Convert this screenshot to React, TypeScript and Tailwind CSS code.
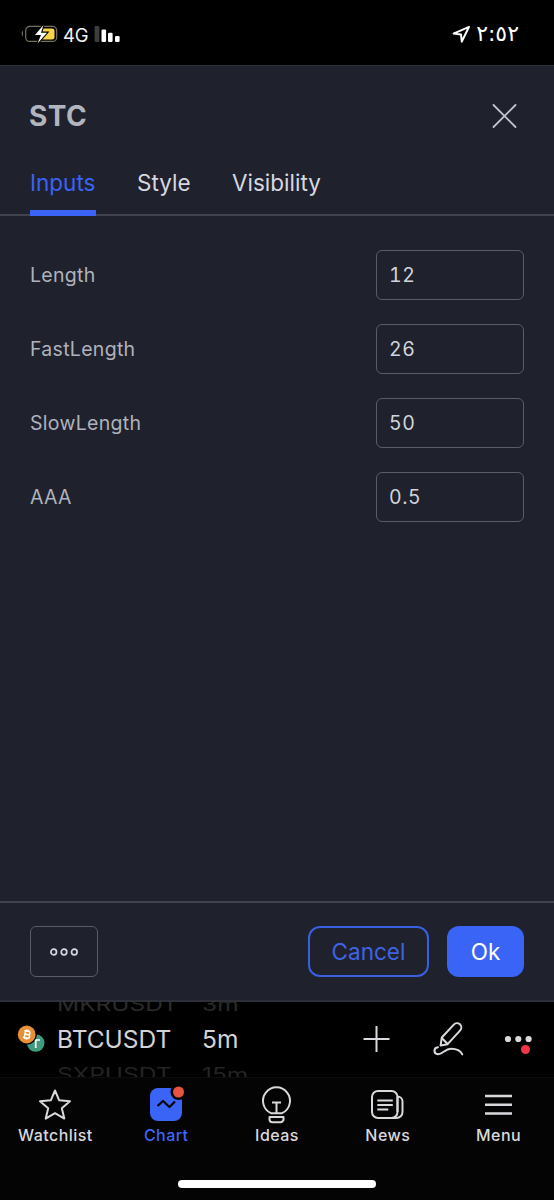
import React from 'react';

interface InputField {
  label: string;
  value: string;
}

const fields: InputField[] = [
  { label: 'Length', value: '12' },
  { label: 'FastLength', value: '26' },
  { label: 'SlowLength', value: '50' },
  { label: 'AAA', value: '0.5' },
];

const StatusBar: React.FC = () => (
  <div className="h-[65px] shrink-0 flex items-start justify-between pl-[21px] pr-[35px] pt-[24px]">
    <div className="flex items-start">
      <svg width="38" height="20" viewBox="0 0 38 20" fill="none">
        <path d="M2 6.5a4 4 0 0 0 0 6z" fill="#66645c" />
        <rect x="4.7" y="2.4" width="31" height="15" rx="4" stroke="#77735f" strokeWidth="1.2" />
        <path d="M20 4.4h11a2.5 2.5 0 0 1 2.5 2.5v6a2.5 2.5 0 0 1-2.5 2.5H20z" fill="#f9d448" />
        <path d="M22.5 1L14 11h6l-3.5 8.5L26 8.7h-6z" fill="#fff" stroke="#000" strokeWidth="2.2" paintOrder="stroke" />
      </svg>
      <span className="ml-[4px] w-[25px] text-[18.5px] leading-[22px] tracking-[-0.3px] text-[#f2f2f2]">4G</span>
      <svg className="ml-[6px]" width="28" height="20" viewBox="0 0 28 20" fill="#fff">
        <rect x="0.6" y="2" width="4.8" height="16" rx="1.2" fill="#3d3d3d" />
        <rect x="7.5" y="5.6" width="4.6" height="12.4" rx="1.2" />
        <rect x="14" y="8.7" width="4.6" height="9.3" rx="1.2" />
        <rect x="21" y="12" width="4.6" height="6" rx="1.2" />
      </svg>
    </div>
    <div className="flex items-start">
      <svg width="20" height="20" viewBox="0 0 20 20" fill="none" stroke="#fff" strokeWidth="2" strokeLinejoin="round">
        <path d="M18 2.8L2.6 9.6l7.4.8.8 7.2z" />
      </svg>
      <span className="ml-[5px] font-['DejaVu_Sans',sans-serif] text-[22px] leading-[20px] text-white">٢:٥٢</span>
    </div>
  </div>
);

const DialogHeader: React.FC = () => (
  <div className="h-[150px] shrink-0 border-b-2 border-[#41434e]">
    <div className="h-[100px] flex items-center justify-between pl-[29px] pr-[37px]">
      <h1 className="text-[28px] font-bold tracking-[0.4px] text-[#b2b5be]">STC</h1>
      <svg width="26" height="26" viewBox="0 0 26 26" stroke="#c1c4cd" strokeWidth="1.8" strokeLinecap="round">
        <path d="M2.5 2l22 22M24.5 2l-22 22" />
      </svg>
    </div>
    <div className="h-[50px] flex pl-[30px] text-[22.5px] leading-[34px] text-[#d6d8e0]">
      <div className="w-[66px] border-b-[6px] border-[#3a64f6] text-[#3a64f6] whitespace-nowrap">Inputs</div>
      <div className="ml-[41px] w-[54px] whitespace-nowrap">Style</div>
      <div className="ml-[41px] whitespace-nowrap">Visibility</div>
    </div>
  </div>
);

const DialogFooter: React.FC = () => (
  <div className="h-[101px] shrink-0 flex items-center justify-between border-y-2 border-t-[#41434e] border-b-[#2c2e38] pl-[30px] pr-[30px]">
    <button className="w-[68px] h-[51px] flex items-center justify-center rounded-[6px] border-[1.5px] border-[#5a5d67]">
      <svg width="30" height="10" viewBox="0 0 30 10" fill="none" stroke="#d6d8e0" strokeWidth="1.7">
        <circle cx="4.7" cy="5" r="2.8" />
        <circle cx="15" cy="5" r="2.8" />
        <circle cx="25.3" cy="5" r="2.8" />
      </svg>
    </button>
    <div className="flex gap-[18px] text-[22.5px]">
      <button className="w-[121px] h-[51px] rounded-[12px] border-2 border-[#3a5fe0] text-[#3f63e4]">Cancel</button>
      <button className="w-[77px] h-[51px] rounded-[12px] bg-[#3a64f6] text-white">Ok</button>
    </div>
  </div>
);

interface WheelProps {
  prev: string;
  current: string;
  next: string;
}

// Picker column, the neighbours are flattened and cut off by the bar edges
const Wheel: React.FC<WheelProps> = ({ prev, current, next }) => (
  <div className="h-[75px] overflow-hidden flex flex-col text-[24.5px] leading-[28px] whitespace-nowrap">
    <div className="-mt-[12px] h-[28px] shrink-0 scale-y-75 text-[#2a2a2a]">{prev}</div>
    <div className="mt-[7px] h-[28px] shrink-0 text-[#d3d3d6]">{current}</div>
    <div className="mt-[7px] h-[28px] shrink-0 scale-y-75 text-[#232323]">{next}</div>
  </div>
);

const SymbolBar: React.FC = () => (
  <div className="h-[75px] shrink-0 flex items-start">
    <svg className="mt-[22px] ml-[17px] mr-[12px]" width="28" height="30" viewBox="0 0 28 30">
      <circle cx="18.7" cy="19" r="8.8" fill="#409b7c" />
      <path d="M14.5 16h8.5M18.7 16v8" stroke="#fff" strokeWidth="1.7" />
      <circle cx="9.7" cy="10.5" r="10.2" fill="#000" />
      <circle cx="9.7" cy="10.5" r="8.9" fill="#e98f35" />
      <g transform="rotate(12 9.7 10.5)" fill="none" stroke="#fff" strokeWidth="1.5">
        <path d="M6.5 7h4.3a1.7 1.7 0 0 1 0 3.5H7.8h3.4a1.7 1.7 0 0 1 0 3.5H6.5M7.9 7v7M8.7 5.5V7M10.7 5.5V7M8.7 14v1.5M10.7 14v1.5" />
      </g>
    </svg>
    <div className="w-[145px]">
      <Wheel prev="MKRUSDT" current="BTCUSDT" next="SXPUSDT" />
    </div>
    <div className="w-[160px]">
      <Wheel prev="3m" current="5m" next="15m" />
    </div>
    <div className="h-[73px] flex items-center">
      <svg width="30" height="30" viewBox="0 0 30 30" stroke="#dadade" strokeWidth="2">
        <path d="M1.5 15h26M14.5 2v26" />
      </svg>
      <svg className="ml-[40px]" width="34" height="38" viewBox="0 0 34 38" fill="none" stroke="#dadade" strokeWidth="2" strokeLinecap="round" strokeLinejoin="round">
        <path d="M9.8 17.5L21.8 4.6a4.2 4.2 0 0 1 6.4 5.8L15.6 24.2l-7 1.4z" />
        <path d="M10 18.2l5.4 5.6" />
        <path d="M6 27.2c-4.7.4-4.7 7 0 7 4.8 0 7-5.4 13-5.4 5 0 9.3 1.4 11.3 5.6" />
      </svg>
      <div className="relative ml-[38px] w-[30px] h-[8px]">
        <svg className="block" width="30" height="8" viewBox="0 0 30 8" fill="#dadade">
          <circle cx="4" cy="4" r="3.1" />
          <circle cx="14.3" cy="4" r="3.1" />
          <circle cx="24.6" cy="4" r="3.1" />
        </svg>
        <span className="absolute left-[17px] top-[10px] w-[9px] h-[9px] rounded-full bg-[#f23645]" />
      </div>
    </div>
  </div>
);

interface NavItemProps {
  label: string;
  active?: boolean;
  children: React.ReactNode;
}

const NavItem: React.FC<NavItemProps> = ({ label, active, children }) => (
  <div className={active ? 'flex flex-col items-center text-[#3f66f5]' : 'flex flex-col items-center text-[#d9d9dd]'}>
    <svg width="40" height="40" viewBox="0 0 40 40" fill="none" stroke="currentColor" strokeWidth="2" strokeLinejoin="round">
      {children}
    </svg>
    <span className="mt-[1px] text-[16px] leading-[20px] font-medium tracking-[0.45px]">{label}</span>
  </div>
);

const BottomNav: React.FC = () => (
  <div className="h-[123px] shrink-0 flex flex-col items-center justify-between border-t border-[#0c0c0c] bg-[#040404] pb-[12px]">
    <div className="w-full grid grid-cols-5 pt-[6px]">
      <NavItem label="Watchlist">
        <path d="M20 6.5l4.2 9.8 10.8.9-8.2 7 2.5 10.4L20 29.2l-9.3 5.4 2.5-10.4-8.2-7 10.8-.9z" />
      </NavItem>
      <NavItem label="Chart" active>
        <rect x="4" y="4" width="32" height="33" rx="8" fill="#3a64f6" stroke="none" />
        <path d="M11.5 22l5.5-5 6.5 6 5.5-5.5" stroke="#040404" strokeWidth="2.2" />
        <circle cx="32.5" cy="8" r="8" fill="#040404" stroke="none" />
        <circle cx="32.5" cy="8" r="5.5" fill="#e65440" stroke="none" />
      </NavItem>
      <NavItem label="Ideas">
        <path d="M14 29.2a13.5 13.5 0 1 1 11 0z" />
        <path d="M15 18.5h9M19.5 18.5V29M12.500 33h14v2.2a3 3 0 0 1-3 3h-8a3 3 0 0 1-3-3z" />
      </NavItem>
      <NavItem label="News">
        <rect x="4" y="7" width="25.5" height="27" rx="6" />
        <path d="M23.5 34h5a6 6 0 0 0 6-6V17.500a5 5 0 0 0-5-5M29.500 12.500V28" />
        <path d="M9.300 16.500h15.500M9.300 21h15.500M9.300 25.500h11" />
      </NavItem>
      <NavItem label="Menu">
        <path d="M6 12h27M6 20.800h27M6 29.500h27" strokeWidth="2.6" />
      </NavItem>
    </div>
    <div className="w-[198px] h-[8px] rounded-full bg-white" />
  </div>
);

const App: React.FC = () => {
  return (
    <div className="w-[554px] h-[1200px] flex flex-col overflow-hidden bg-black font-['Inter','Liberation_Sans',sans-serif]">
      <StatusBar />
      <div className="h-[937px] shrink-0 flex flex-col border-t border-[#2c2e38] bg-[#1f212c]">
        <DialogHeader />
        <div className="flex-1 flex flex-col gap-[24px] pt-[34px] px-[30px]">
          {fields.map((field) => (
            <div key={field.label} className="flex items-center justify-between">
              <label className="pt-[2px] text-[19.5px] tracking-[0.3px] text-[#afb2bc]">{field.label}</label>
              <input
                type="text"
                defaultValue={field.value}
                className="w-[148px] h-[50px] px-[12px] rounded-[6px] border-[1.5px] border-[#5a5d67] text-[19.5px] tracking-[0.6px] tabular-nums text-[#d1d4dc]"
              />
            </div>
          ))}
        </div>
        <DialogFooter />
      </div>
      <SymbolBar />
      <BottomNav />
    </div>
  );
};

export default App;
